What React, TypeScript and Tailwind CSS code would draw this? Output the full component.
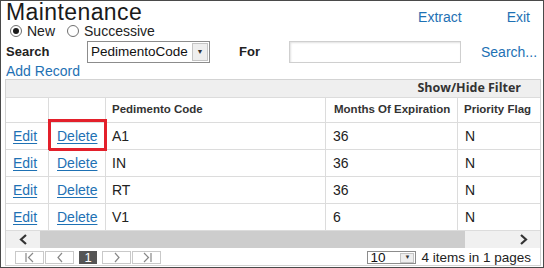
// Maintenance grid screen

const rows = [
  { code: 'A1', months: '36', flag: 'N' },
  { code: 'IN', months: '36', flag: 'N' },
  { code: 'RT', months: '36', flag: 'N' },
  { code: 'V1', months: '6', flag: 'N' },
];

function Radio({ checked }: { checked?: boolean }) {
  return (
    <span className="w-[12px] h-[12px] rounded-full border border-[#707070] bg-white flex items-center justify-center shrink-0">
      {checked && <span className="w-[6px] h-[6px] rounded-full bg-[#1a1a1a]" />}
    </span>
  );
}

function PagerButton({ children }: { children: React.ReactNode }) {
  return (
    <div className="w-[29px] h-[13px] border border-[#c9c9c9] bg-white flex items-center justify-center">
      {children}
    </div>
  );
}

export default function App() {
  return (
    <div className="w-[544px] h-[268px] border border-[#4a4a4a] bg-white overflow-hidden font-['Liberation_Sans',Arial,sans-serif] text-[#222]">
      {/* title + actions */}
      <div className="h-[22px] flex">
        <h1 className="pl-[5px] text-[23px] leading-[22px] tracking-[0.4px] text-[#1a1a1a]">Maintenance</h1>
        <div className="ml-auto flex pt-[8px] pr-[13px] text-[14px] leading-[16px] text-[#1e71b4]">
          <span>Extract</span>
          <span className="ml-[45px]">Exit</span>
        </div>
      </div>

      {/* mode radios */}
      <div className="h-[17px] flex items-start pl-[9px] text-[14px] leading-[16px]">
        <div className="flex items-center gap-[5px] h-[16px]">
          <Radio checked />
          <span>New</span>
        </div>
        <div className="flex items-center gap-[5px] h-[16px] ml-[12px]">
          <Radio />
          <span>Successive</span>
        </div>
      </div>

      {/* search */}
      <div className="h-[24px] flex items-center pl-[5px]">
        <span className="w-[81px] font-bold text-[13px]">Search</span>
        <div className="w-[123px] h-[22px] border border-[#8c8c8c] bg-white flex items-center">
          <span className="pl-[3px] text-[13.5px] leading-none text-[#111]">PedimentoCode</span>
          <div className="ml-auto mr-px w-[16px] h-[18px] bg-[#eeeeee] border border-[#c4c4c4] flex items-center justify-center text-[7px] text-[#333]">
            ▼
          </div>
        </div>
        <span className="ml-[29px] w-[50px] font-bold text-[13px]">For</span>
        <div className="w-[172px] h-[22px] border border-[#cfcfcf] bg-white shadow-[inset_1px_1px_2px_rgba(0,0,0,0.12)]" />
        <span className="ml-[20px] text-[14px] text-[#1e71b4]">Search...</span>
      </div>

      {/* add record */}
      <div className="h-[15px] pl-[5px] text-[14px] leading-[15px] text-[#1e71b4]">Add Record</div>

      {/* grid */}
      <div className="ml-[4px] w-[536px] border border-[#d3d3d3]">
        <div className="h-[18px] bg-[#efefef] border-b border-[#dcdcdc] flex items-center justify-end pr-[19px] font-['Open_Sans',sans-serif] font-bold text-[12.5px] text-[#333]">
          Show/Hide Filter
        </div>

        <div className="h-[25px] flex border-b border-[#dcdcdc] font-bold text-[11.5px] text-[#333]">
          <div className="w-[42px]" />
          <div className="w-[57px] border-l border-[#dcdcdc]" />
          <div className="w-[220px] border-l border-[#dcdcdc] pl-[6px] flex items-center">Pedimento Code</div>
          <div className="w-[132px] border-l border-[#dcdcdc] pl-[8px] flex items-center">Months Of Expiration</div>
          <div className="w-[83px] border-l border-[#dcdcdc] pl-[6px] flex items-center">Priority Flag</div>
        </div>

        {rows.map((r, i) => (
          <div key={r.code} className="h-[27px] flex border-b border-[#dcdcdc] text-[14px]">
            <div className="w-[42px] pl-[7px] flex items-center">
              <span className="text-[#1e71b4] underline underline-offset-2">Edit</span>
            </div>
            <div className="w-[57px] border-l border-[#dcdcdc] pl-[8px] flex items-center relative">
              <span className="text-[#1e71b4] underline underline-offset-2">Delete</span>
              {i === 0 && (
                <div className="absolute left-[-1px] right-[-2px] top-[-4px] bottom-[-2px] border-[3px] border-[#e3202b]" />
              )}
            </div>
            <div className="w-[220px] border-l border-[#dcdcdc] pl-[6px] flex items-center">{r.code}</div>
            <div className="w-[132px] border-l border-[#dcdcdc] pl-[7px] flex items-center">{r.months}</div>
            <div className="w-[83px] border-l border-[#dcdcdc] pl-[7px] flex items-center">{r.flag}</div>
          </div>
        ))}

        {/* horizontal scrollbar */}
        <div className="h-[17px] flex bg-[#f0f0f0]">
          <div className="w-[34px] flex items-center justify-center">
            <svg width="9" height="11" viewBox="0 0 9 11">
              <polyline points="7,1 2,5.5 7,10" fill="none" stroke="#333" strokeWidth="2.2" />
            </svg>
          </div>
          <div className="w-[425px] bg-[#cdcdcd]" />
          <div className="ml-auto w-[34px] flex items-center justify-center">
            <svg width="9" height="11" viewBox="0 0 9 11">
              <polyline points="2,1 7,5.5 2,10" fill="none" stroke="#333" strokeWidth="2.2" />
            </svg>
          </div>
        </div>

        {/* pager */}
        <div className="h-[17px] flex items-start pt-[3px] pl-[9px] pr-[9px]">
          <PagerButton>
            <svg width="12" height="11" viewBox="0 0 12 11">
              <line x1="2" y1="1" x2="2" y2="10" stroke="#888" strokeWidth="1.2" />
              <polyline points="9,1 4.5,5.5 9,10" fill="none" stroke="#888" strokeWidth="1.2" />
            </svg>
          </PagerButton>
          <div className="ml-px">
            <PagerButton>
              <svg width="8" height="11" viewBox="0 0 8 11">
                <polyline points="6,1 2,5.5 6,10" fill="none" stroke="#888" strokeWidth="1.2" />
              </svg>
            </PagerButton>
          </div>
          <div className="ml-[5px] w-[18px] h-[13px] bg-[#555] text-white text-[13px] leading-[13px] flex items-center justify-center">1</div>
          <div className="ml-[5px]">
            <PagerButton>
              <svg width="8" height="11" viewBox="0 0 8 11">
                <polyline points="2,1 6,5.5 2,10" fill="none" stroke="#888" strokeWidth="1.2" />
              </svg>
            </PagerButton>
          </div>
          <div className="ml-px">
            <PagerButton>
              <svg width="12" height="11" viewBox="0 0 12 11">
                <polyline points="3,1 7.5,5.5 3,10" fill="none" stroke="#888" strokeWidth="1.2" />
                <line x1="10" y1="1" x2="10" y2="10" stroke="#888" strokeWidth="1.2" />
              </svg>
            </PagerButton>
          </div>

          <div className="ml-auto flex items-center h-[13px]">
            <div className="w-[49px] h-[13px] border border-[#8c8c8c] bg-white flex items-center">
              <span className="pl-[2px] text-[13.5px] leading-none text-[#111]">10</span>
              <div className="ml-auto mr-px w-[14px] h-[10px] bg-[#eeeeee] border border-[#c4c4c4] flex items-center justify-center text-[6px] text-[#333]">
                ▼
              </div>
            </div>
            <span className="ml-[5px] text-[13.5px] leading-none text-[#222]">4 items in 1 pages</span>
          </div>
        </div>
      </div>
    </div>
  );
}
